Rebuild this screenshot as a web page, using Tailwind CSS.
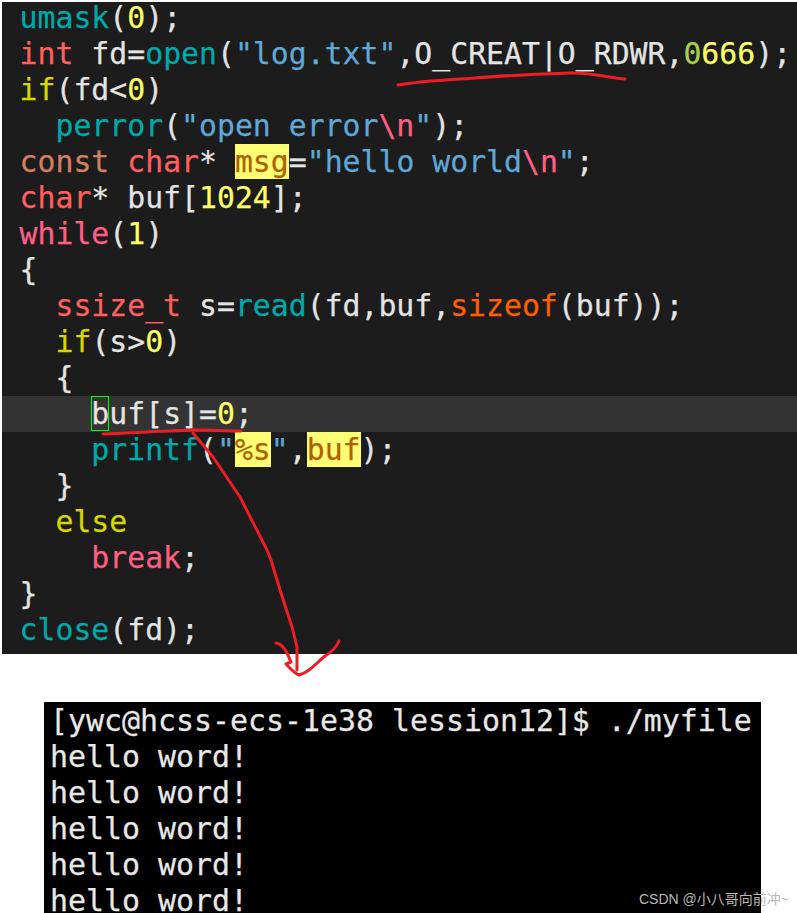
<!DOCTYPE html>
<html lang="en">
<head>
<meta charset="UTF-8">
<title>myfile</title>
<script src="https://cdn.jsdelivr.net/npm/@tailwindcss/browser@4"></script>
</head>
<body class="bg-white">
<div class="relative w-[797px] h-[913px] overflow-hidden font-['DejaVu_Sans_Mono',monospace]">

  <!-- vim -->
  <div class="ml-[2px] mt-[2px] h-[652px] w-[795px] overflow-hidden bg-[#1c1c1c] pl-[17.6px] text-[29.8px] leading-[36px] text-[#e4e4e4] [-webkit-text-stroke:0.25px]">
    <div class="-mt-[2px]">
    <div class="h-[36px] whitespace-pre"><span class="text-[#00aaaa]">umask</span>(<span class="text-[#ffff66]">0</span>);</div>
    <div class="h-[36px] whitespace-pre"><span class="text-[#ff5f5f]">int</span> fd=<span class="text-[#00aaaa]">open</span>(<span class="text-[#5fa8d7]">"log.txt"</span>,O_CREAT|O_RDWR,<span class="text-[#a8d050]">0</span><span class="text-[#ffff66]">666</span>);</div>
    <div class="h-[36px] whitespace-pre"><span class="text-[#d7d700]">if</span>(fd&lt;<span class="text-[#ffff66]">0</span>)</div>
    <div class="h-[36px] whitespace-pre">  <span class="text-[#00aaaa]">perror</span>(<span class="text-[#5fa8d7]">"open error<span class="text-[#ff5f87]">\n</span>"</span>);</div>
    <div class="h-[36px] whitespace-pre"><span class="text-[#d08060]">const</span> <span class="text-[#ff5f5f]">char</span>* <span class="bg-[#ffff73] text-[#b05f00]">msg</span>=<span class="text-[#5fa8d7]">"hello world<span class="text-[#ff5f87]">\n</span>"</span>;</div>
    <div class="h-[36px] whitespace-pre"><span class="text-[#ff5f5f]">char</span>* buf[<span class="text-[#ffff66]">1024</span>];</div>
    <div class="h-[36px] whitespace-pre"><span class="text-[#ff5f87]">while</span>(<span class="text-[#ffff66]">1</span>)</div>
    <div class="h-[36px] whitespace-pre">{</div>
    <div class="h-[36px] whitespace-pre">  <span class="text-[#ff5f5f]">ssize_t</span> s=<span class="text-[#00aaaa]">read</span>(fd,buf,<span class="text-[#ff5f00]">sizeof</span>(buf));</div>
    <div class="h-[36px] whitespace-pre">  <span class="text-[#d7d700]">if</span>(s&gt;<span class="text-[#ffff66]">0</span>)</div>
    <div class="h-[36px] whitespace-pre">  {</div>
    <div class="h-[36px] -ml-[17.6px] pl-[17.6px] bg-[#333333] whitespace-pre">    <span class="outline outline-1 -outline-offset-1 outline-[#00ff00]">b</span>uf[s]=<span class="text-[#ffff66]">0</span>;</div>
    <div class="h-[36px] whitespace-pre">    <span class="text-[#00aaaa]">printf</span>(<span class="text-[#5fa8d7]">"</span><span class="bg-[#ffff73] text-[#b05f00]">%s</span><span class="text-[#5fa8d7]">"</span>,<span class="bg-[#ffff73] text-[#b05f00]">buf</span>);</div>
    <div class="h-[36px] whitespace-pre">  }</div>
    <div class="h-[36px] whitespace-pre">  <span class="text-[#d7d700]">else</span></div>
    <div class="h-[36px] whitespace-pre">    <span class="text-[#ff5f87]">break</span>;</div>
    <div class="h-[36px] whitespace-pre">}</div>
    <div class="h-[36px] whitespace-pre"><span class="text-[#00aaaa]">close</span>(fd);</div>
    </div>
  </div>

  <!-- terminal -->
  <div class="ml-[44px] mt-[48px] h-[211px] w-[717px] overflow-hidden bg-black pl-[6px] pt-[1px] text-[29.9px] leading-[36px] text-[#e8e8e8] [-webkit-text-stroke:0.25px]">
    <div class="h-[36px] whitespace-pre">[ywc@hcss-ecs-1e38 lession12]$ ./myfile</div>
    <div class="h-[36px] whitespace-pre">hello word!</div>
    <div class="h-[36px] whitespace-pre">hello word!</div>
    <div class="h-[36px] whitespace-pre">hello word!</div>
    <div class="h-[36px] whitespace-pre">hello word!</div>
    <div class="h-[36px] whitespace-pre">hello word!</div>
  </div>

  <!-- red marker strokes drawn over the shots -->
  <svg class="absolute left-0 top-0 pointer-events-none" width="797" height="913" viewBox="0 0 797 913" fill="none" stroke="#ee1c25" stroke-width="3" stroke-linecap="round" stroke-linejoin="round">
    <path d="M398 85 C420 81 445 80 475 78 C510 75 545 74 570 73 C590 72 610 78 625 79"/>
    <path d="M103 434 C130 433 160 431 195 430 C210 430 225 431 241 431"/>
    <path d="M193 433 L213 457 L240 497 L267 550 L271 560 L281 593 L292 627 L297 647 L297 670"/>
    <path d="M276 643 C284 644 288 655 291 662 L286 664 C290 668 293 672 299 675 C310 672 315 664 325 656 C332 652 336 648 339 641"/>
  </svg>

  <div class="absolute left-[639px] top-[890px] text-[14px] leading-[18px] text-[#b9b9b9] font-['Liberation_Sans','Noto_Sans_CJK_SC',sans-serif] whitespace-nowrap">CSDN @小八哥向前冲~</div>
</div>
</body>
</html>
